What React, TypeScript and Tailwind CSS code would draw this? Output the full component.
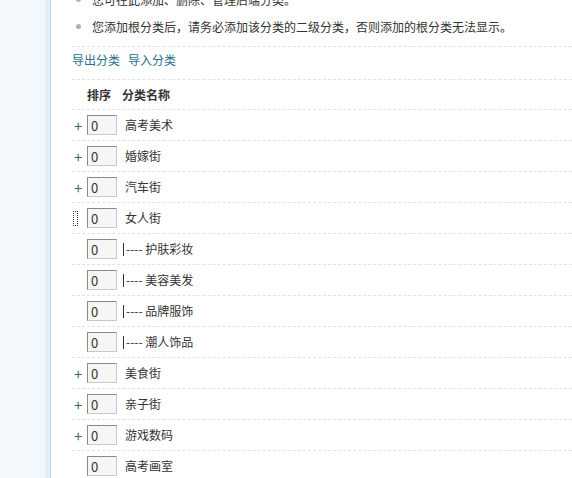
import React from 'react';

type Row = { name: string; sub?: boolean; mark?: 'plus' | 'focus' | 'none' };

const rows: Row[] = [
  { name: '高考美术', mark: 'plus' },
  { name: '婚嫁街', mark: 'plus' },
  { name: '汽车街', mark: 'plus' },
  { name: '女人街', mark: 'focus' },
  { name: '护肤彩妆', sub: true },
  { name: '美容美发', sub: true },
  { name: '品牌服饰', sub: true },
  { name: '潮人饰品', sub: true },
  { name: '美食街', mark: 'plus' },
  { name: '亲子街', mark: 'plus' },
  { name: '游戏数码', mark: 'plus' },
  { name: '高考画室', mark: 'none' },
];

const font = { fontFamily: '"Noto Sans CJK SC", "DejaVu Sans", sans-serif' };

const OrderBox = () => (
  <div className="w-[30px] h-[20px] bg-[#f6f6f6] border border-t-[#8a8a8a] border-l-[#8a8a8a] border-r-[#c8c8c8] border-b-[#c8c8c8] pl-[3px] flex items-center text-[13px] text-[#333] leading-none">
    0
  </div>
);

export default function App() {
  return (
    <div className="flex w-[572px] h-[478px] overflow-hidden bg-white text-[12px] text-[#333]" style={font}>
      {/* side frame */}
      <div className="w-[45px] shrink-0 bg-[#f2f8fc]" />
      <div className="w-[5px] shrink-0 bg-[#e2eef8]" />
      <div className="w-[1px] shrink-0 bg-[#c4d9ec]" />

      <div className="flex-1 pl-[21px]">
        <ul className="-mt-[14px] pb-[6px] border-b border-dashed border-[#dce3ea]">
          <li className="h-[27px] flex items-center">
            <span className="w-[20px] flex pl-[4px]">
              <span className="w-[5px] h-[5px] rounded-full bg-[#b0b0b0]" />
            </span>
            <span>您可在此添加、删除、管理后端分类。</span>
          </li>
          <li className="h-[27px] flex items-center">
            <span className="w-[20px] flex pl-[4px]">
              <span className="w-[5px] h-[5px] rounded-full bg-[#b0b0b0]" />
            </span>
            <span>您添加根分类后，请务必添加该分类的二级分类，否则添加的根分类无法显示。</span>
          </li>
        </ul>

        <div className="h-[33px] pt-[4px] flex gap-[8px] border-b border-dashed border-[#dce3ea] text-[#2b6e8e]">
          <span className="leading-[18px]">导出分类</span>
          <span className="leading-[18px]">导入分类</span>
        </div>

        <div className="h-[30px] flex items-center border-b border-dashed border-[#dce3ea] font-bold">
          <span className="ml-[15px]">排序</span>
          <span className="ml-[11px]">分类名称</span>
        </div>

        {rows.map((r, i) => (
          <div key={i} className="h-[31px] flex items-center border-b border-dashed border-[#dce3ea]">
            <div className="w-[15px] flex pl-[1px]">
              {r.mark === 'plus' && <span className="text-[15px] leading-none text-[#3d6a80] pl-[1px]">+</span>}
              {r.mark === 'focus' && <span className="w-[5px] h-[15px] border border-dotted border-[#333]" />}
            </div>
            <OrderBox />
            {r.sub ? (
              <span className="ml-[6px] flex items-center">
                <span className="inline-block w-[1px] h-[13px] bg-[#333] mr-[2px]" />
                <span>----&nbsp;{r.name}</span>
              </span>
            ) : (
              <span className="ml-[8px]">{r.name}</span>
            )}
          </div>
        ))}
      </div>
    </div>
  );
}
